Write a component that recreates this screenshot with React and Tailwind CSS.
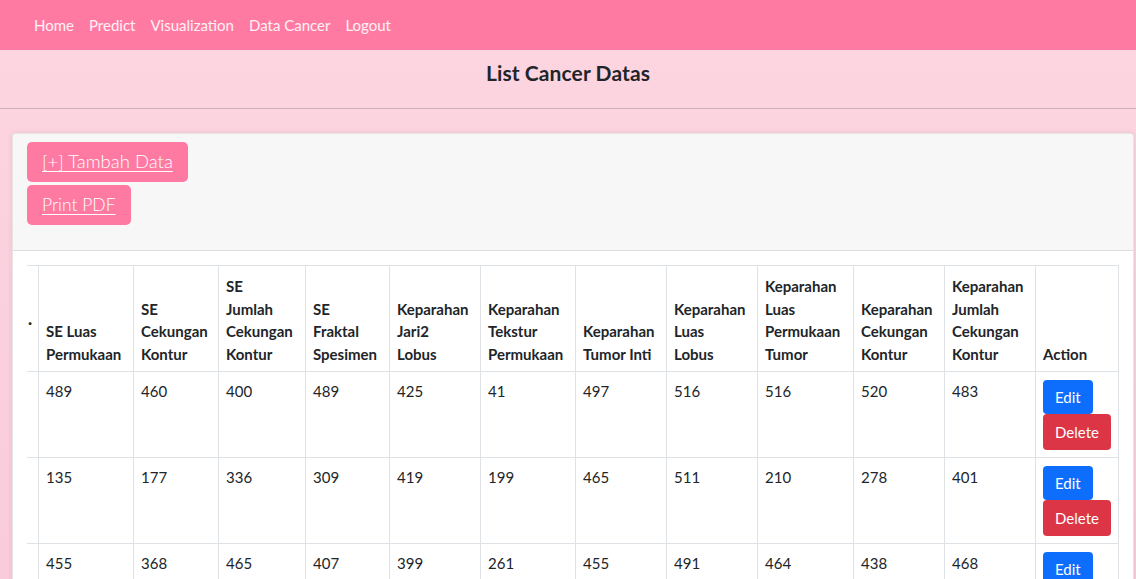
import React from "react";

const headers = [
  ["SE Luas", "Permukaan"],
  ["SE", "Cekungan", "Kontur"],
  ["SE", "Jumlah", "Cekungan", "Kontur"],
  ["SE", "Fraktal", "Spesimen"],
  ["Keparahan", "Jari2", "Lobus"],
  ["Keparahan", "Tekstur", "Permukaan"],
  ["Keparahan", "Tumor Inti"],
  ["Keparahan", "Luas", "Lobus"],
  ["Keparahan", "Luas", "Permukaan", "Tumor"],
  ["Keparahan", "Cekungan", "Kontur"],
  ["Keparahan", "Jumlah", "Cekungan", "Kontur"],
];

const widths = [95, 85, 87, 84, 91, 95, 91, 91, 96, 91, 91];

const rows = [
  [489, 460, 400, 489, 425, 41, 497, 516, 516, 520, 483],
  [135, 177, 336, 309, 419, 199, 465, 511, 210, 278, 401],
  [455, 368, 465, 407, 399, 261, 455, 491, 464, 438, 468],
];

export default function App() {
  return (
    <div
      className="min-h-[579px] bg-gradient-to-b from-[#fdd6e1] to-[#f9cadb] text-[#212529] overflow-hidden"
      style={{ fontFamily: "Lato, 'Open Sans', sans-serif" }}
    >
      <nav className="h-[50px] bg-[#ff7aa2] flex items-center px-[26.5px]">
        {["Home", "Predict", "Visualization", "Data Cancer", "Logout"].map((l) => (
          <a key={l} className="px-[7.5px] text-[15px] text-white/90 leading-[22px]">
            {l}
          </a>
        ))}
      </nav>
      <header className="h-[59px] border-b border-[#c9b2ba] flex items-center justify-center">
        <h4 className="text-[21px] font-bold leading-none text-[#212529] tracking-[0.1px] -mt-[13px]">List Cancer Datas</h4>
      </header>
      <div className="mt-[24px] ml-[12px] mr-[2px] bg-white rounded-[4px] border border-black/10 shadow-[0_0_6px_rgba(0,0,0,0.08)]">
        <div className="bg-[#f7f7f7] rounded-t-[4px] border-b border-black/10 h-[117px] pt-[8px] px-[14px] flex flex-col items-start gap-[3px]">
          <button className="bg-[#ff7aa2] text-white rounded-[5px] h-[40px] px-[15px] text-[18.5px] underline underline-offset-[3px] decoration-1 font-light">
            [+] Tambah Data
          </button>
          <button className="bg-[#ff7aa2] text-white rounded-[5px] h-[40px] px-[15px] text-[17.5px] underline underline-offset-[3px] decoration-1 font-light">
            Print PDF
          </button>
        </div>
        <div className="p-[14px] pb-0">
          <table className="table-fixed border-collapse w-[1091px] text-[15px] leading-[22.5px]">
            <colgroup>
              <col style={{ width: 11 }} />
              {widths.map((w, i) => (
                <col key={i} style={{ width: w }} />
              ))}
              <col style={{ width: 83 }} />
            </colgroup>
            <thead>
              <tr>
                <th className="border-y border-[#dee2e6] border-r align-middle text-left overflow-hidden p-0 pl-[1px]">
                  <span className="font-bold relative top-[4px]">·</span>
                </th>
                {headers.map((h, i) => (
                  <th
                    key={i}
                    className="border border-[#dee2e6] align-bottom text-left font-bold px-[7.5px] pt-[9px] pb-[6px] whitespace-nowrap"
                  >
                    {h.map((line, j) => (
                      <div key={j}>{line}</div>
                    ))}
                  </th>
                ))}
                <th className="border border-[#dee2e6] align-bottom text-left font-bold px-[7.5px] pt-[9px] pb-[6px]">
                  Action
                </th>
              </tr>
            </thead>
            <tbody>
              {rows.map((r, i) => (
                <tr key={i}>
                  <td className="border-y border-r border-[#dee2e6]"></td>
                  {r.map((v, j) => (
                    <td
                      key={j}
                      className="border border-[#dee2e6] align-top px-[7.5px] pt-[8px] pb-[8px] text-[#212529]"
                    >
                      {v}
                    </td>
                  ))}
                  <td className="border border-[#dee2e6] align-top px-[7.5px] pt-[8px] pb-[7px]">
                    <div className="flex flex-col items-start">
                      <button className="bg-[#0d6efd] text-white rounded-[4px] h-[34px] px-[12px] text-[15px]">
                        Edit
                      </button>
                      <button className="bg-[#dc3545] text-white rounded-[4px] h-[36px] px-[12px] text-[15px]">
                        Delete
                      </button>
                    </div>
                  </td>
                </tr>
              ))}
            </tbody>
          </table>
        </div>
      </div>
    </div>
  );
}
